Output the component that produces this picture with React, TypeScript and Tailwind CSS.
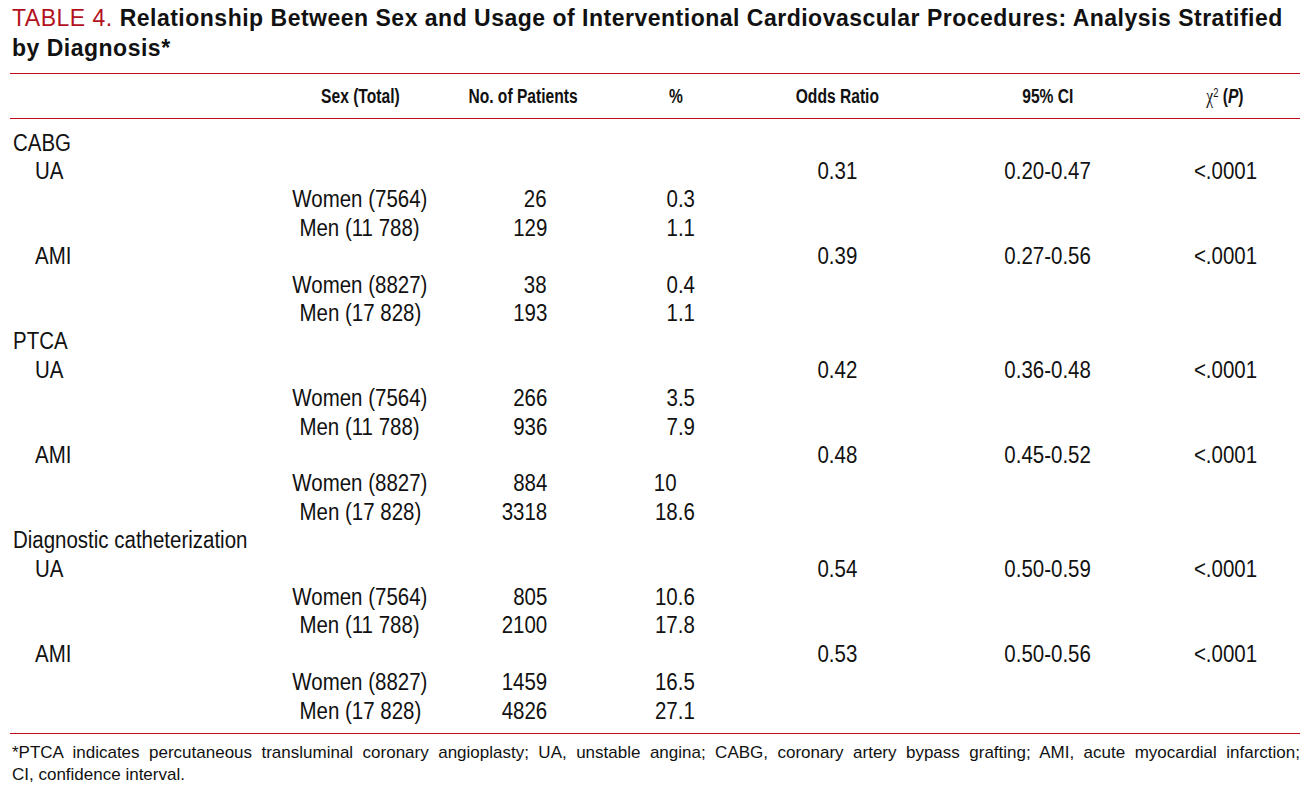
type Row = {
  label?: string;
  level?: 0 | 1;
  sex?: string;
  n?: string;
  pct?: string;
  pctShort?: boolean;
  or?: string;
  ci?: string;
  p?: string;
};

const ROWS: Row[] = [
  { label: "CABG", level: 0 },
  { label: "UA", level: 1, or: "0.31", ci: "0.20-0.47", p: "<.0001" },
  { sex: "Women (7564)", n: "26", pct: "0.3" },
  { sex: "Men (11 788)", n: "129", pct: "1.1" },
  { label: "AMI", level: 1, or: "0.39", ci: "0.27-0.56", p: "<.0001" },
  { sex: "Women (8827)", n: "38", pct: "0.4" },
  { sex: "Men (17 828)", n: "193", pct: "1.1" },
  { label: "PTCA", level: 0 },
  { label: "UA", level: 1, or: "0.42", ci: "0.36-0.48", p: "<.0001" },
  { sex: "Women (7564)", n: "266", pct: "3.5" },
  { sex: "Men (11 788)", n: "936", pct: "7.9" },
  { label: "AMI", level: 1, or: "0.48", ci: "0.45-0.52", p: "<.0001" },
  { sex: "Women (8827)", n: "884", pct: "10", pctShort: true },
  { sex: "Men (17 828)", n: "3318", pct: "18.6" },
  { label: "Diagnostic catheterization", level: 0 },
  { label: "UA", level: 1, or: "0.54", ci: "0.50-0.59", p: "<.0001" },
  { sex: "Women (7564)", n: "805", pct: "10.6" },
  { sex: "Men (11 788)", n: "2100", pct: "17.8" },
  { label: "AMI", level: 1, or: "0.53", ci: "0.50-0.56", p: "<.0001" },
  { sex: "Women (8827)", n: "1459", pct: "16.5" },
  { sex: "Men (17 828)", n: "4826", pct: "27.1" },
];

const GRID = "grid grid-cols-[240px_220px_106px_200px_122px_300px_54px]";

// no condensed face is installed, so the table text is Liberation Sans squeezed sideways
const HEAD = "inline-block scale-x-[0.78] whitespace-nowrap";
const CELL = "inline-block scale-x-[0.89] whitespace-nowrap";

export default function App() {
  return (
    <div className="w-[1310px] h-[793px] overflow-hidden bg-white text-[#111] px-[10px] font-['Liberation_Sans',Arial,sans-serif]">
      {/* title */}
      <h1 className="pt-[3px] pl-[2px] text-[23px] leading-[30px] tracking-[0.5px] font-bold whitespace-nowrap">
        <span className="font-normal text-[#b3111d]">TABLE 4. </span>
        Relationship Between Sex and Usage of Interventional Cardiovascular Procedures: Analysis Stratified
        <br />
        by Diagnosis*
      </h1>

      <div className="mt-[10px] border-t border-[#c00d1a]" />

      {/* header */}
      <div className={`${GRID} h-[44px] items-center text-[20px] font-bold`}>
        <div />
        <div className="flex justify-center">
          <span className={HEAD}>Sex (Total)</span>
        </div>
        <div className="flex justify-center">
          <span className={HEAD}>No. of Patients</span>
        </div>
        <div className="flex justify-center">
          <span className={HEAD}>%</span>
        </div>
        <div className="flex justify-center">
          <span className={HEAD}>Odds Ratio</span>
        </div>
        <div className="flex justify-center">
          <span className={HEAD}>95% CI</span>
        </div>
        <div className="flex justify-center">
          <span className={HEAD}>
            <span className="font-['Liberation_Serif',serif] font-normal">χ</span>
            <sup className="text-[12px] font-normal">2</sup> (<span className="italic">P</span>)
          </span>
        </div>
      </div>

      <div className="border-t border-[#c00d1a]" />

      {/* body */}
      <div className="pt-[10px] pb-[8px] text-[23px]">
        {ROWS.map((r, i) => (
          <div key={i} className={`${GRID} h-[28.4px] items-center leading-none`}>
            <div className={`flex ${r.level === 1 ? "pl-[25px]" : "pl-[3px]"}`}>
              <span className={`${CELL} origin-left`}>{r.label}</span>
            </div>
            <div className="flex justify-center">
              <span className={CELL}>{r.sex}</span>
            </div>
            <div className="flex justify-end pr-[29px]">
              <span className={`${CELL} origin-right`}>{r.n}</span>
            </div>
            <div className={`flex justify-end ${r.pctShort ? "pr-[99px]" : "pr-[81px]"}`}>
              <span className={`${CELL} origin-right`}>{r.pct}</span>
            </div>
            <div className="flex justify-center">
              <span className={CELL}>{r.or}</span>
            </div>
            <div className="flex justify-center">
              <span className={CELL}>{r.ci}</span>
            </div>
            <div className="flex justify-center">
              <span className={CELL}>{r.p}</span>
            </div>
          </div>
        ))}
      </div>

      <div className="border-t border-[#c00d1a]" />

      {/* footnote */}
      <div className="mt-[8px] pl-[2px] text-[17px] leading-[22px]">
        <p className="text-justify [text-align-last:justify]">
          *PTCA indicates percutaneous transluminal coronary angioplasty; UA, unstable angina; CABG, coronary artery bypass grafting; AMI, acute myocardial infarction;
        </p>
        <p>CI, confidence interval.</p>
      </div>
    </div>
  );
}
